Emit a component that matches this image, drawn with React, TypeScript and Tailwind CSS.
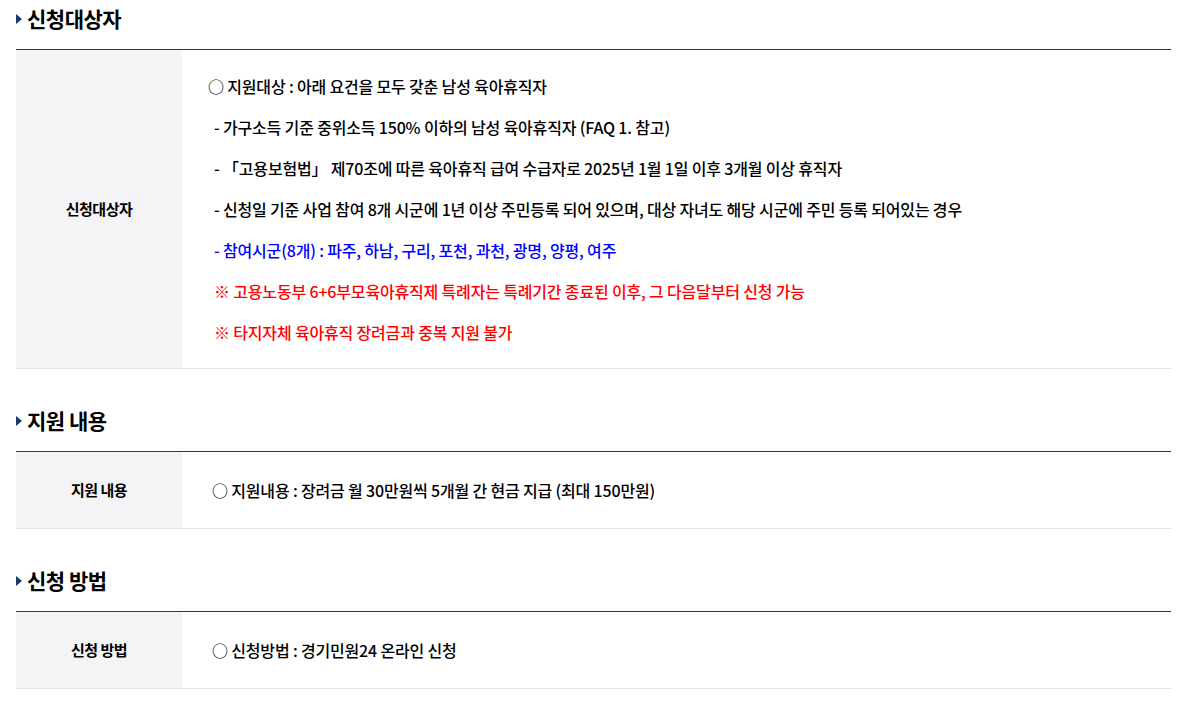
import type { ReactNode } from "react";

const font = { fontFamily: '"Noto Sans CJK KR", "Noto Sans", sans-serif' };

function SectionTitle({ children }: { children: ReactNode }) {
  return (
    <h2 className="flex h-[49px] items-center gap-[5px] pb-[12px] text-[21px] font-bold tracking-[-0.5px] text-black">
      <span className="h-0 w-0 border-y-[5.5px] border-l-[6px] border-y-transparent border-l-[#17386b]" />
      {children}
    </h2>
  );
}

function Row({
  label,
  children,
  className = "",
}: {
  label: string;
  children: ReactNode;
  className?: string;
}) {
  return (
    <div className="flex border-t border-[#1b3a63] border-b border-b-[#e2e2e2]">
      <div className="flex w-[166px] shrink-0 items-center justify-center bg-[#f4f4f6] text-[15px] font-bold tracking-[-0.5px] text-black">
        {label}
      </div>
      <div className={`flex-1 text-[16px] font-medium tracking-[-0.17px] text-black ${className}`}>
        {children}
      </div>
    </div>
  );
}

export default function App() {
  return (
    <div className="w-[1188px] bg-white px-4" style={font}>
      <div className="w-[1155px]">
        <SectionTitle>신청대상자</SectionTitle>
        <Row label="신청대상자" className="pl-[26px] pt-[25px] pb-[25px]">
          <div className="flex flex-col gap-[19px] leading-[22px]">
            <p>○ 지원대상 : 아래 요건을 모두 갖춘 남성 육아휴직자</p>
            <p className="pl-[6px]">- 가구소득 기준 중위소득 150% 이하의 남성 육아휴직자 (FAQ 1. 참고)</p>
            <p className="pl-[6px]">- 「고용보험법」 제70조에 따른 육아휴직 급여 수급자로 2025년 1월 1일 이후 3개월 이상 휴직자</p>
            <p className="pl-[6px]">- 신청일 기준 사업 참여 8개 시군에 1년 이상 주민등록 되어 있으며, 대상 자녀도 해당 시군에 주민 등록 되어있는 경우</p>
            <p className="pl-[6px] text-[#0000ff]">- 참여시군(8개) : 파주, 하남, 구리, 포천, 과천, 광명, 양평, 여주</p>
            <p className="pl-[6px] text-[#ff0000]">※ 고용노동부 6+6부모육아휴직제 특례자는 특례기간 종료된 이후, 그 다음달부터 신청 가능</p>
            <p className="pl-[6px] text-[#ff0000]">※ 타지자체 육아휴직 장려금과 중복 지원 불가</p>
          </div>
        </Row>

        <div className="h-[33px]" />
        <SectionTitle>지원 내용</SectionTitle>
        <Row label="지원 내용" className="flex h-[76px] items-center pl-[30px]">
          <p>○ 지원내용 : 장려금 월 30만원씩 5개월 간 현금 지급 (최대 150만원)</p>
        </Row>

        <div className="h-[33px]" />
        <SectionTitle>신청 방법</SectionTitle>
        <Row label="신청 방법" className="flex h-[76px] items-center pl-[30px]">
          <p>○ 신청방법 : 경기민원24 온라인 신청</p>
        </Row>
        <div className="h-[12px]" />
      </div>
    </div>
  );
}
